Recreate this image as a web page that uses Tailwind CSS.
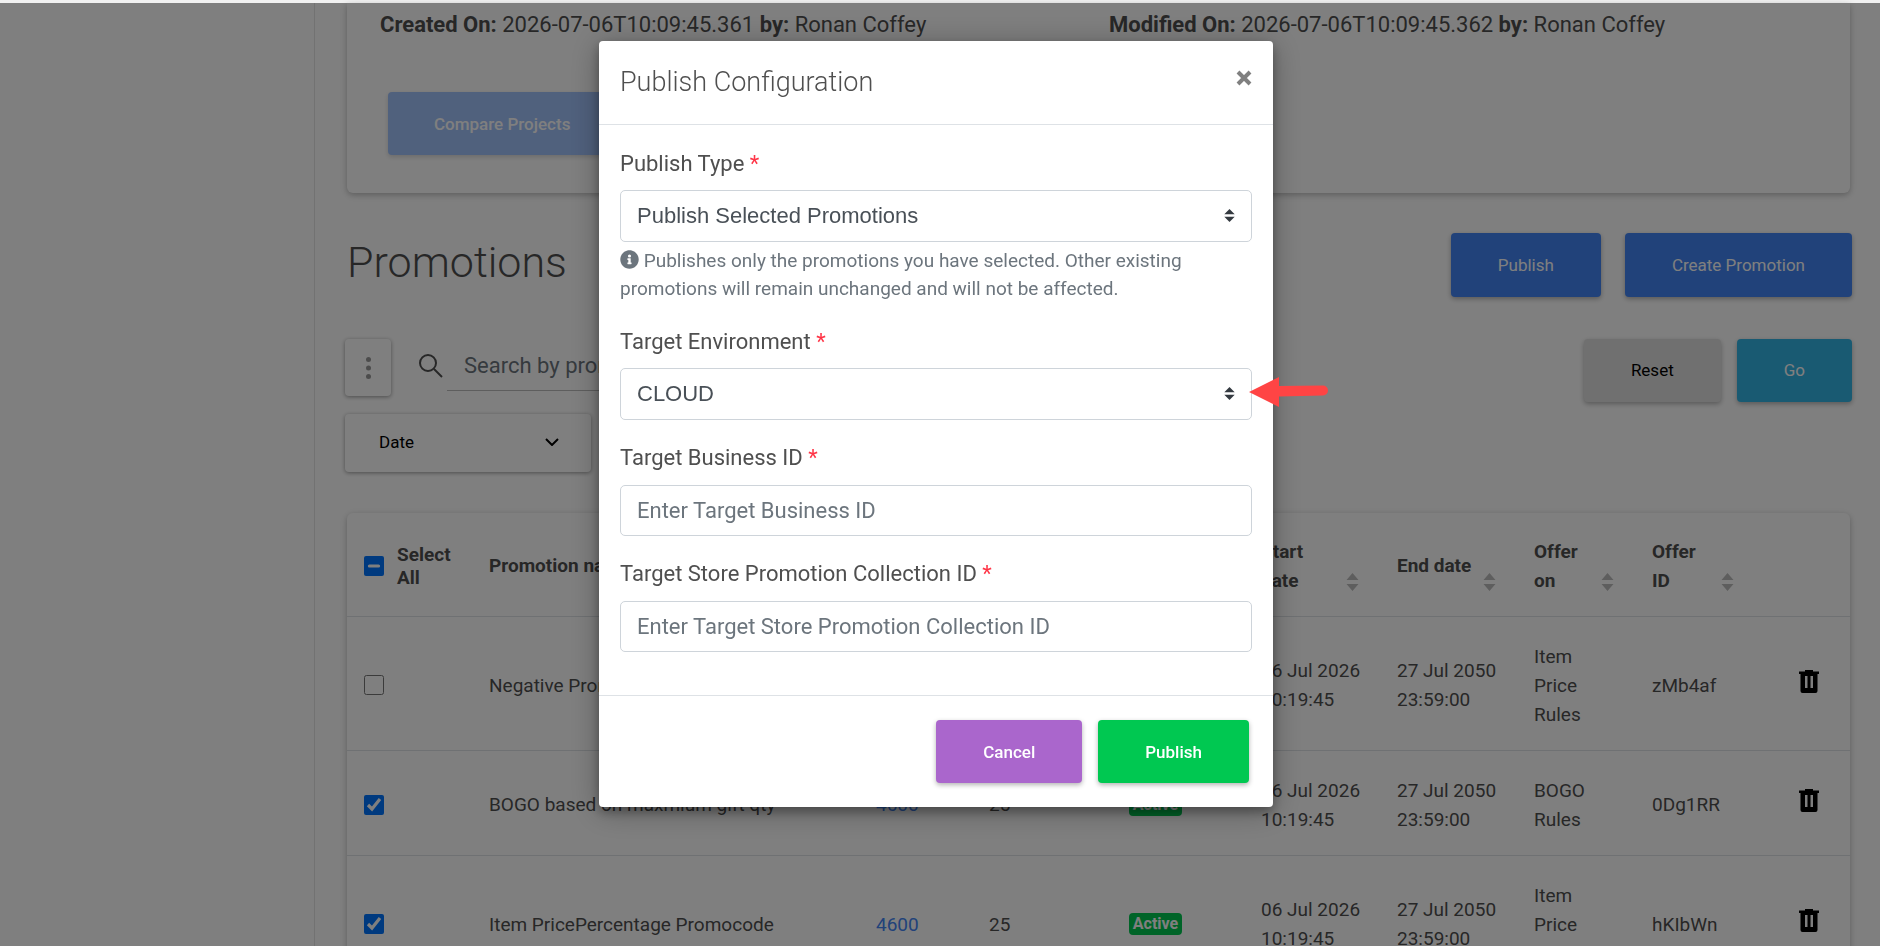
<!DOCTYPE html>
<html lang="en">
<head>
  <meta charset="UTF-8" />
  <meta name="viewport" content="width=device-width, initial-scale=1.0"/>
  <title>Promotions</title>
  <script src="https://cdn.jsdelivr.net/npm/@tailwindcss/browser@4"></script>
</head>
<body class="h-screen overflow-hidden bg-white font-['Roboto',sans-serif] text-[22px] leading-8 text-[#4f4f4f]">

  <!-- Icons -->
  <svg class="hidden">
    <symbol id="sort" viewBox="0 0 12 18">
      <path d="M6 0l6 7H0zM6 18l6-7H0z"/>
    </symbol>
    <symbol id="updown" viewBox="0 0 4 5">
      <path d="M2 0L0 2h4zm0 5L0 3h4z"/>
    </symbol>
    <symbol id="trash" viewBox="0 0 20 23">
      <path fill-rule="evenodd" d="M6 0h8v1.500h6v2.500h-1.500v17a2 2 0 0 1-2 2h-13a2 2 0 0 1-2-2V4H0V1.500h6zM6 6v12h2.500V6zM11.500 6v12H14V6z"/>
    </symbol>
  </svg>

  <div class="flex h-full border-t-[3px] border-[#f1f1f1]">
    <!-- Sidebar -->
    <aside class="w-[315px] shrink-0 border-r border-[#e4e4e4]"></aside>

    <main class="min-w-0 flex-1 pl-[30px] pr-7">
      <!-- Project card -->
      <section class="mx-0.5 rounded-b-md px-[33px] pt-1.5 pb-[38px] shadow-[0_2px_5px_rgba(0,0,0,0.16),0_2px_10px_rgba(0,0,0,0.12)]">
        <div class="grid grid-cols-[729px_1fr]">
          <p><b>Created On:</b> 2026-07-06T10:09:45.361 <b>by:</b> Ronan Coffey</p>
          <p><b>Modified On:</b> 2026-07-06T10:09:45.362 <b>by:</b> Ronan Coffey</p>
        </div>
        <button class="mt-[51px] ml-2 block h-[63px] rounded-sm bg-[#a1c2fa] px-[46px] text-[17px] font-medium text-white shadow-[0_2px_5px_rgba(0,0,0,0.16)]" disabled>Compare Projects</button>
      </section>

      <!-- Heading -->
      <div class="mt-10 flex justify-between">
        <h1 class="ml-0.5 text-[43px] leading-[58px] font-light">Promotions</h1>
        <div class="flex gap-6 text-[17px] text-white">
          <button class="h-16 rounded-sm bg-[#4285f4] px-[47px] shadow-[0_2px_5px_rgba(0,0,0,0.3)]">Publish</button>
          <button class="h-16 rounded-sm bg-[#4285f4] px-[47px] shadow-[0_2px_5px_rgba(0,0,0,0.3)]">Create Promotion</button>
        </div>
      </div>

      <!-- Filters -->
      <div class="mt-[42px] flex items-start">
        <button aria-label="More filters" class="flex h-[57px] w-[46px] items-center justify-center rounded-sm shadow-[0_1px_4px_rgba(0,0,0,0.4)]">
          <svg class="h-[22px] w-[5px] fill-[#999]" viewBox="0 0 5 22"><circle cx="2.500" cy="2.500" r="2.500"/><circle cx="2.500" cy="11" r="2.500"/><circle cx="2.500" cy="19.500" r="2.500"/></svg>
        </button>
        <svg class="mt-[15px] ml-7 size-6 fill-none stroke-[#4f4f4f] stroke-2" viewBox="0 0 24 24"><circle cx="9" cy="9" r="8"/><path d="M15 15l8 8"/></svg>
        <input aria-label="Search promotions" type="text" placeholder="Search by promotion name" class="ml-1 h-[52px] w-[500px] border-b border-[#bdbdbd] px-[17px] pt-0.5 placeholder:text-[#6c757d]"/>
        <div class="ml-auto flex gap-4 text-[17px]">
          <button class="h-[63px] rounded-sm bg-[#e0e0e0] px-[47px] pb-0.5 text-black shadow-[0_2px_5px_rgba(0,0,0,0.3)]">Reset</button>
          <button class="h-[63px] rounded-sm bg-[#33b5e5] px-[47px] pb-0.5 text-white shadow-[0_2px_5px_rgba(0,0,0,0.3)]">Go</button>
        </div>
      </div>
      <button class="mt-3 flex h-[58px] w-[246px] items-center justify-between rounded-sm pr-8 pb-[3px] pl-[34px] text-[17px] text-black shadow-[0_1px_4px_rgba(0,0,0,0.4)]">
        Date
        <svg class="h-2 w-3.5 fill-none stroke-black stroke-2" viewBox="0 0 14 8"><path d="M1 1l6 6 6-6"/></svg>
      </button>

      <!-- Promotions table -->
      <div class="mx-0.5 mt-[41px] rounded-md shadow-[0_2px_5px_rgba(0,0,0,0.16),0_2px_10px_rgba(0,0,0,0.12)]">
        <table class="w-full table-fixed text-left text-[19px] leading-[29px]">
          <colgroup>
            <col class="w-32"/><col/><col class="w-[113px]"/><col class="w-[140px]"/><col class="w-[132px]"/><col class="w-[136px]"/><col class="w-[137px]"/><col class="w-[118px]"/><col class="w-[120px]"/><col class="w-[92px]"/>
          </colgroup>
          <thead>
            <tr class="h-[103px] [&>th]:pt-[3px]">
              <th class="pl-[17px]">
                <label class="flex items-center gap-[13px] leading-[23px]"><input id="selectAll" type="checkbox" class="size-5 shrink-0"/><span class="w-16">Select All</span></label>
              </th>
              <th class="px-3.5">Promotion name</th>
              <th class="px-3.5">Code</th>
              <th class="px-3.5">Priority</th>
              <th class="px-3.5">Status</th>
              <th class="pr-6 pl-3.5"><div class="flex items-end justify-between"><span class="w-14">Start date</span><svg class="mb-1 h-[18px] w-[13px] shrink-0 fill-[#bdbdbd]"><use href="#sort"/></svg></div></th>
              <th class="pr-6 pl-3.5"><div class="flex h-[58px] items-center justify-between"><span class="whitespace-nowrap">End date</span><svg class="mb-1 h-[18px] w-[13px] shrink-0 self-end fill-[#bdbdbd]"><use href="#sort"/></svg></div></th>
              <th class="pr-6 pl-3.5"><div class="flex items-end justify-between"><span class="w-14">Offer on</span><svg class="mb-1 h-[18px] w-[13px] shrink-0 fill-[#bdbdbd]"><use href="#sort"/></svg></div></th>
              <th class="pr-6 pl-3.5"><div class="flex items-end justify-between"><span class="w-14">Offer ID</span><svg class="mb-1 h-[18px] w-[13px] shrink-0 fill-[#bdbdbd]"><use href="#sort"/></svg></div></th>
              <th></th>
            </tr>
          </thead>
          <tbody class="[&_td]:pt-[25px] [&_td]:pb-[21px]">
            <tr class="border-t border-[#dee2e6]">
              <td class="pl-[17px]"><input type="checkbox" aria-label="Select Negative Promotion" class="block size-5"/></td>
              <td class="px-3.5">Negative Promotion</td>
              <td class="px-3.5"><a href="#" class="text-[#4285f4]">4600</a></td>
              <td class="px-3.5">25</td>
              <td class="px-3.5"><span class="block w-[53px] rounded-sm bg-[#00c851] text-center text-[16px] leading-[22px] font-bold text-white">Active</span></td>
              <td class="px-3.5">06 Jul 2026 10:19:45</td>
              <td class="px-3.5">27 Jul 2050 23:59:00</td>
              <td class="pr-9 pl-3.5">Item Price Rules</td>
              <td class="px-3.5">zMb4af</td>
              <td class="pl-[41px]"><button aria-label="Delete" class="mb-2 block"><svg class="h-[23px] w-5 fill-black"><use href="#trash"/></svg></button></td>
            </tr>
            <tr class="border-t border-[#dee2e6]">
              <td class="pl-[17px]"><input type="checkbox" aria-label="Select BOGO" class="block size-5" checked/></td>
              <td class="px-3.5">BOGO based on maxmium gift qty</td>
              <td class="px-3.5"><a href="#" class="text-[#4285f4]">4600</a></td>
              <td class="px-3.5">25</td>
              <td class="px-3.5"><span class="block w-[53px] rounded-sm bg-[#00c851] text-center text-[16px] leading-[22px] font-bold text-white">Active</span></td>
              <td class="px-3.5">06 Jul 2026 10:19:45</td>
              <td class="px-3.5">27 Jul 2050 23:59:00</td>
              <td class="pr-9 pl-3.5">BOGO Rules</td>
              <td class="px-3.5">0Dg1RR</td>
              <td class="pl-[41px]"><button aria-label="Delete" class="mb-2 block"><svg class="h-[23px] w-5 fill-black"><use href="#trash"/></svg></button></td>
            </tr>
            <tr class="border-t border-[#dee2e6]">
              <td class="pl-[17px]"><input type="checkbox" aria-label="Select Item PricePercentage" class="block size-5" checked/></td>
              <td class="px-3.5">Item PricePercentage Promocode</td>
              <td class="px-3.5"><a href="#" class="text-[#4285f4]">4600</a></td>
              <td class="px-3.5">25</td>
              <td class="px-3.5"><span class="block w-[53px] rounded-sm bg-[#00c851] text-center text-[16px] leading-[22px] font-bold text-white">Active</span></td>
              <td class="px-3.5">06 Jul 2026 10:19:45</td>
              <td class="px-3.5">27 Jul 2050 23:59:00</td>
              <td class="pr-9 pl-3.5">Item Price Rules</td>
              <td class="px-3.5">hKIbWn</td>
              <td class="pl-[41px]"><button aria-label="Delete" class="mb-2 block"><svg class="h-[23px] w-5 fill-black"><use href="#trash"/></svg></button></td>
            </tr>
          </tbody>
        </table>
      </div>
    </main>
  </div>

  <!-- Publish modal -->
  <div class="fixed inset-x-0 top-[3px] bottom-0 flex items-start justify-center bg-black/50 pt-[38px] pr-2">
    <form role="dialog" aria-labelledby="modalTitle" class="w-full max-w-[674px] rounded-sm bg-white shadow-[0_5px_11px_rgba(0,0,0,0.3),0_4px_30px_rgba(0,0,0,0.3)]">
      <div class="flex h-[84px] items-start justify-between border-b border-[#dee2e6] px-[21px]">
        <h2 id="modalTitle" class="pt-[25px] text-[27px] font-light">Publish Configuration</h2>
        <button type="button" aria-label="Close" class="mt-[29px]"><svg class="size-4 fill-none stroke-[#808080] stroke-4" viewBox="0 0 16 16"><path d="M2 2l12 12M14 2L2 14"/></svg></button>
      </div>

      <div class="px-[21px] pt-6 pb-5 leading-[30px]">
        <div class="mb-6">
          <label for="publishType" class="mb-[11px] block">Publish Type <span class="text-[#ff3547]">*</span></label>
          <div class="relative">
            <select id="publishType" class="block h-[52px] w-full appearance-none rounded-[5px] border border-[#ced4da] px-4 font-['Liberation_Sans',sans-serif] text-[#495057]">
              <option>Publish Selected Promotions</option>
            </select>
            <svg class="pointer-events-none absolute top-[19px] right-[17px] h-[13px] w-[11px] fill-[#343a40]"><use href="#updown"/></svg>
          </div>
          <p class="mt-[5px] text-[19px] leading-7 text-[#6c757d]">
            <svg class="mb-1 inline size-[19px] fill-[#6c757d]" viewBox="0 0 512 512"><path d="M256 8C119 8 8 119 8 256s111 248 248 248 248-111 248-248S393 8 256 8zm0 110a42 42 0 1 1 0 84 42 42 0 0 1 0-84zm56 254c0 7-5 12-12 12h-88c-7 0-12-5-12-12v-24c0-7 5-12 12-12h12v-64h-12c-7 0-12-5-12-12v-24c0-7 5-12 12-12h64c7 0 12 5 12 12v100h12c7 0 12 5 12 12z"/></svg>
            Publishes only the promotions you have selected. Other existing promotions will remain unchanged and will not be affected.
          </p>
        </div>
        <div class="mb-[23px]">
          <label for="targetEnv" class="mb-[11px] block">Target Environment <span class="text-[#ff3547]">*</span></label>
          <div class="relative">
            <select id="targetEnv" class="block h-[52px] w-full appearance-none rounded-[5px] border border-[#ced4da] px-4 font-['Liberation_Sans',sans-serif] text-[#495057]">
              <option>CLOUD</option>
            </select>
            <svg class="pointer-events-none absolute top-[19px] right-[17px] h-[13px] w-[11px] fill-[#343a40]"><use href="#updown"/></svg>
            <!-- Pointer arrow -->
            <svg class="pointer-events-none absolute top-2 left-full -ml-[3px] h-8 w-20 fill-[#ff4444]" viewBox="0 0 80 32"><path d="M0 16L30 1v9l44-.5a5 5 0 0 1 0 10L30 20.500V31z"/></svg>
          </div>
        </div>
        <div class="mb-[23px]">
          <label for="businessId" class="mb-3 block">Target Business ID <span class="text-[#ff3547]">*</span></label>
          <input id="businessId" type="text" placeholder="Enter Target Business ID" class="block h-[51px] w-full rounded-[5px] border border-[#ced4da] px-4 placeholder:text-[#6c757d]"/>
        </div>
        <div class="mb-[23px]">
          <label for="collectionId" class="mb-3 block">Target Store Promotion Collection ID <span class="text-[#ff3547]">*</span></label>
          <input id="collectionId" type="text" placeholder="Enter Target Store Promotion Collection ID" class="block h-[51px] w-full rounded-[5px] border border-[#ced4da] px-4 placeholder:text-[#6c757d]"/>
        </div>
      </div>

      <div class="flex justify-end gap-4 border-t border-[#dee2e6] p-6 text-[17px] font-medium text-white">
        <button type="button" class="h-[63px] rounded-sm bg-[#aa66cc] px-[47px] shadow-[0_2px_5px_rgba(0,0,0,0.3)]">Cancel</button>
        <button type="submit" class="h-[63px] rounded-sm bg-[#00c851] px-[47px] shadow-[0_2px_5px_rgba(0,0,0,0.3)]">Publish</button>
      </div>
    </form>
  </div>

  <script>
    document.getElementById('selectAll').indeterminate = true;
  </script>

</body>
</html>
